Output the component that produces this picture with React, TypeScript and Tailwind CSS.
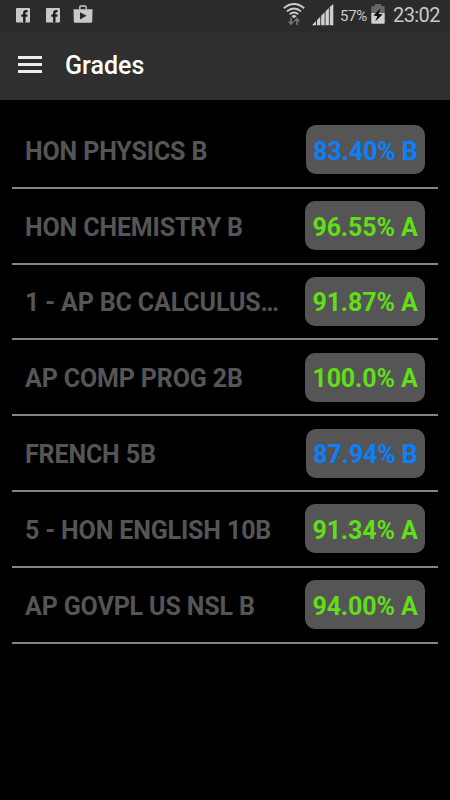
const courses = [
  { name: 'HON PHYSICS B', grade: '83.40% B', color: 'text-[#0a80ff]', width: 'w-[119px]' },
  { name: 'HON CHEMISTRY B', grade: '96.55% A', color: 'text-[#60df18]', width: 'w-[120px]' },
  { name: '1 - AP BC CALCULUS…', grade: '91.87% A', color: 'text-[#60df18]', width: 'w-[120px]' },
  { name: 'AP COMP PROG 2B', grade: '100.0% A', color: 'text-[#60df18]', width: 'w-[120px]' },
  { name: 'FRENCH 5B', grade: '87.94% B', color: 'text-[#0a80ff]', width: 'w-[119px]' },
  { name: '5 - HON ENGLISH 10B', grade: '91.34% A', color: 'text-[#60df18]', width: 'w-[120px]' },
  { name: 'AP GOVPL US NSL B', grade: '94.00% A', color: 'text-[#60df18]', width: 'w-[120px]' },
];

function FacebookIcon() {
  return (
    <svg width="14" height="15" viewBox="0 0 14 15" className="block">
      <rect width="14" height="14.5" rx="0.8" fill="#c9c9c9" />
      <path d="M7.1 14.5V8.8H5.3V6.6h1.8V5c0-2 1.1-3 3-3h1.5v2.2h-1c-.9 0-1.1.4-1.1 1.1v1.3h2.1l-.3 2.2H9.5v5.7z" fill="#1c1c1c" />
    </svg>
  );
}

function StoreIcon() {
  return (
    <svg width="20" height="18" viewBox="0 0 20 18" className="block">
      <path d="M6.8 4.5V2.2Q6.8 1 8 1h4q1.2 0 1.2 1.2v2.3" fill="none" stroke="#c9c9c9" strokeWidth="1.4" />
      <path d="M.5 4.2h19l-.3 12.2q-.1 1.3-1.4 1.3H2.2q-1.3 0-1.4-1.3z" fill="#c9c9c9" />
      <path d="M7 7.2v7.2l6.6-3.6z" fill="#292929" />
    </svg>
  );
}

function WifiIcon() {
  return (
    <svg width="22" height="24" viewBox="0 0 22 24" className="block">
      <g fill="none" stroke="#cdcdcd" strokeWidth="1.8">
        <path d="M.8 5.2Q11-3.2 21.2 5.2" />
        <path d="M3.9 8.4Q11 2.5 18.1 8.4" />
        <path d="M6.8 11.2Q11 7.8 15.2 11.2" />
      </g>
      <path d="M8.5 13.2Q11 10.8 13.5 13.2L11 15.3z" fill="#cdcdcd" />
      <path d="M8 14.8v6M5.7 18.5L8 21.1l2.3-2.6M14 22v-6M11.7 18.2L14 15.6l2.3 2.6" fill="none" stroke="#777" strokeWidth="1.6" />
    </svg>
  );
}

function SignalIcon() {
  return (
    <svg width="22" height="22" viewBox="0 0 22 22" className="block" fill="#d0d0d0">
      <path d="M0 21.2L4 17v4.2zM5 16L8.3 12.7v8.5H5zM9.2 11.7l3.4-3.4v12.9H9.2zM13.5 7.4L16.9 4v17.2h-3.4zM17.8 3.1L21.3 0v21.2h-3.5z" />
    </svg>
  );
}

function BatteryIcon() {
  return (
    <svg width="14" height="20" viewBox="0 0 14 20" className="block">
      <path d="M4 0h6v2h3q.7 0 .7.7V9H.3V2.7Q.3 2 1 2h3z" fill="#666" />
      <path d="M.3 9h13.4v10q0 .7-.7.7H1q-.7 0-.7-.7z" fill="#d0d0d0" />
      <path d="M9.6 4.2L2.4 11.6l4 .6-2.2 5.3 7.4-7.1-4-.7z" fill="#111" />
    </svg>
  );
}

export default function App() {
  return (
    <div className="flex h-[800px] w-[450px] flex-col overflow-hidden bg-black font-[Roboto,'Liberation_Sans',sans-serif]">
      <header className="h-[100px] shrink-0 bg-[#2f2f2f]">
        <div className="flex h-8 items-start bg-[#2b2b2b] text-[#c8c8c8]">
          <div className="ml-4 mt-2"><FacebookIcon /></div>
          <div className="ml-4 mt-2"><FacebookIcon /></div>
          <div className="ml-[13px] mt-[5px]"><StoreIcon /></div>
          <div className="ml-auto mt-[3px]"><WifiIcon /></div>
          <div className="ml-[7px] mt-1"><SignalIcon /></div>
          <span className="ml-[6px] mt-[5px] w-[28px] whitespace-nowrap text-[15px] leading-[22px] tracking-[-0.3px]">57%</span>
          <div className="ml-[3px] mt-1"><BatteryIcon /></div>
          <span className="ml-[8px] mr-[10px] mt-[3px] w-[47px] whitespace-nowrap text-[20px] leading-6 tracking-[-0.6px]">23:02</span>
        </div>
        <div className="flex h-[68px] items-center">
          <div className="ml-[18px] flex w-6 flex-col gap-1 pb-[3px]">
            <div className="h-[3px] bg-[#ededed]" />
            <div className="h-[3px] bg-[#ededed]" />
            <div className="h-[3px] bg-[#ededed]" />
          </div>
          <h1 className="ml-[23px] text-[25px] font-medium leading-8 text-white">Grades</h1>
        </div>
      </header>
      <main className="px-3 pt-[12.9px]">
        {courses.map((course) => (
          <div key={course.name} className="flex h-[75.83px] flex-col">
            <div className="flex flex-1 items-center justify-between pl-[13px] pr-[13px]">
              <span className="w-[264px] whitespace-nowrap pt-[4px] text-[25px] font-bold leading-8 tracking-[-0.14px] text-[#555]">{course.name}</span>
              <span className={`flex h-[49px] items-center justify-center whitespace-nowrap rounded-[10px] bg-[#555] pt-[4px] text-[25px] font-bold leading-8 tracking-[-0.12px] ${course.width} ${course.color}`}>
                {course.grade}
              </span>
            </div>
            <div className="h-[2px] shrink-0 bg-[#858585]" />
          </div>
        ))}
      </main>
    </div>
  );
}
